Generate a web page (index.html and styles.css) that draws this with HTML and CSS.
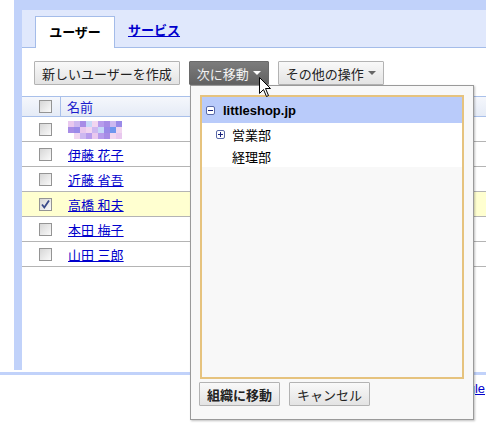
FILE: index.html
```html
<!DOCTYPE html>
<html lang="ja">
<head>
    <meta charset="UTF-8">
    <title>ユーザー</title>
    <link rel="stylesheet" href="styles.css">
</head>
<body>
    <div class="frame">
        <!-- Tabs -->
        <div class="tabbar">
            <div class="tab active">ユーザー</div>
            <a class="tab-link" href="#">サービス</a>
        </div>

        <div class="content">
            <!-- Toolbar -->
            <div class="toolbar">
                <button class="btn">新しいユーザーを作成</button>
                <button class="btn dark">次に移動 <span class="caret"></span></button>
                <button class="btn">その他の操作 <span class="caret"></span></button>
            </div>

            <!-- User list -->
            <div class="list">
                <div class="row head">
                    <div class="cell-check"><span class="check"></span></div>
                    <div class="cell-name">名前</div>
                </div>
                <div class="row">
                    <div class="cell-check"><span class="check"></span></div>
                    <div class="cell-name">
                        <div class="mosaic">
                            <span class="m1"></span><span class="m2"></span><span class="m3"></span><span class="m4"></span><span class="m5"></span><span class="m6"></span><span class="m3"></span><span class="m2"></span><span class="m7"></span><span class="m0"></span>
                            <span class="m3"></span><span class="m7"></span><span class="m1"></span><span class="m5"></span><span class="m2"></span><span class="m4"></span><span class="m7"></span><span class="m8"></span><span class="m5"></span><span class="m0"></span>
                            <span class="m0"></span><span class="m5"></span><span class="m2"></span><span class="m6"></span><span class="m1"></span><span class="m6"></span><span class="m3"></span><span class="m5"></span><span class="m1"></span><span class="m0"></span>
                        </div>
                    </div>
                </div>
                <div class="row">
                    <div class="cell-check"><span class="check"></span></div>
                    <div class="cell-name"><a href="#">伊藤 花子</a></div>
                </div>
                <div class="row">
                    <div class="cell-check"><span class="check"></span></div>
                    <div class="cell-name"><a href="#">近藤 省吾</a></div>
                </div>
                <div class="row selected">
                    <div class="cell-check">
                        <span class="check">
                            <svg width="11" height="11" viewBox="0 0 11 11"><path d="M2 5.5 L4.3 8.5 L9 1.5" fill="none" stroke="#3a4a8a" stroke-width="1.8"/></svg>
                        </span>
                    </div>
                    <div class="cell-name"><a href="#">高橋 和夫</a></div>
                </div>
                <div class="row">
                    <div class="cell-check"><span class="check"></span></div>
                    <div class="cell-name"><a href="#">本田 梅子</a></div>
                </div>
                <div class="row">
                    <div class="cell-check"><span class="check"></span></div>
                    <div class="cell-name"><a href="#">山田 三郎</a></div>
                </div>
            </div>
        </div>
    </div>

    <div class="footer-line"></div>
    <div class="footer"><a href="#">©2010 Google</a></div>

    <!-- Move to organisation popup -->
    <div class="popup">
        <div class="tree">
            <div class="tree-root">
                <span class="toggle">
                    <svg width="9" height="9" viewBox="0 0 9 9"><rect x="0.5" y="0.5" width="8" height="8" rx="1.5" fill="#fff" stroke="#5a6aa8"/><path d="M2 4.5 H7" stroke="#1a237e" stroke-width="1"/></svg>
                </span>
                littleshop.jp
            </div>
            <div class="tree-item">
                <span class="toggle">
                    <svg width="9" height="9" viewBox="0 0 9 9"><rect x="0.5" y="0.5" width="8" height="8" rx="1.5" fill="#fff" stroke="#5a6aa8"/><path d="M2 4.5 H7 M4.5 2 V7" stroke="#1a237e" stroke-width="1"/></svg>
                </span>
                営業部
            </div>
            <div class="tree-item leaf">経理部</div>
        </div>
        <div class="popup-actions">
            <button class="btn strong">組織に移動</button>
            <button class="btn">キャンセル</button>
        </div>
    </div>

    <!-- Mouse pointer -->
    <svg class="cursor" width="13" height="21" viewBox="0 0 13 21">
        <path d="M0.5 0.5 L0.5 16.5 L4.5 12.5 L7.5 19.5 L9.5 18.5 L6.5 11.5 L11.5 11.5 Z" fill="#fff" stroke="#000" stroke-width="1"/>
    </svg>
</body>
</html>
```

FILE: styles.css
```css
html, body {
    margin: 0;
    overflow: hidden;
}
body {
    font-family: "Liberation Sans", Arial, "Noto Sans CJK JP", sans-serif;
    font-size: 13px;
    color: #000;
    background-color: #fff;
    position: relative;
    height: 425px;
}
a {
    color: #0000cc;
}
.frame {
    margin-left: 14px;
    padding: 10px 0 0 8px;
    height: 370px;
    box-sizing: border-box;
    background-color: #c1d2fa;
}
.tabbar {
    display: flex;
    align-items: flex-end;
    height: 37px;
    padding-left: 13px;
    background-color: #e0e8fc;
    border-bottom: 1px solid #a4bce9;
}
.tab {
    width: 78px;
    height: 31px;
    line-height: 31px;
    text-align: center;
    margin-bottom: -1px;
    background-color: #fff;
    border: 1px solid #a4bce9;
    border-bottom: none;
    font-weight: bold;
}
.tab-link {
    margin-left: 13px;
    margin-bottom: 8px;
    font-weight: bold;
}
.content {
    background-color: #fff;
    height: 322px;
}
.toolbar {
    display: flex;
    gap: 9px;
    padding: 13px 0 0 12px;
}
.btn {
    height: 24px;
    padding: 0 7px;
    font-family: inherit;
    font-size: 13px;
    color: #222;
    background: linear-gradient(#f9f9f9, #e3e3e3);
    border: 1px solid #b3b3b3;
    border-radius: 1px;
    display: flex;
    align-items: center;
    gap: 4px;
}
.btn.dark {
    color: #f2f2f2;
    background: linear-gradient(#7c7c7c, #626262);
    border-color: #6a6a6a;
}
.btn.strong {
    font-weight: bold;
}
.caret {
    width: 0;
    height: 0;
    border-left: 4px solid transparent;
    border-right: 4px solid transparent;
    border-top: 4px solid #666;
}
.btn.dark .caret {
    border-top-color: #fff;
}
.list {
    margin-top: 11px;
}
.row {
    display: flex;
    align-items: center;
    height: 24px;
    border-bottom: 1px solid #b4b4b4;
}
.row.head {
    height: 19px;
    border-top: 1px solid #a9c0ea;
    border-bottom: 1px solid #a9c0ea;
    background: linear-gradient(#f5f7fc, #e5ebf6);
}
.row.head .cell-check {
    border-right: 1px solid #a9c0ea;
    width: 39px;
}
.row.head .cell-name {
    color: #1c1ccc;
}
.row.selected {
    background-color: #ffffd0;
}
.cell-check {
    width: 40px;
    height: 100%;
    display: flex;
    align-items: center;
    padding-left: 17px;
    box-sizing: border-box;
}
.cell-name {
    padding-left: 6px;
}
.check {
    width: 11px;
    height: 11px;
    border: 1px solid #949494;
    background: linear-gradient(135deg, #d6d6d6, #fafafa);
    display: flex;
}
.mosaic {
    display: grid;
    grid-template-columns: repeat(10, 6px);
    grid-auto-rows: 6px;
    margin-top: 1px;
}
.m0 { background-color: #fff; }
.m1 { background-color: #e9c8ee; }
.m2 { background-color: #cdb8f0; }
.m3 { background-color: #a78ce6; }
.m4 { background-color: #c6d8f8; }
.m5 { background-color: #f1d6f0; }
.m6 { background-color: #b79cec; }
.m7 { background-color: #9a8ae8; }
.m8 { background-color: #6f96ee; }
.footer-line {
    margin-top: 2px;
    height: 3px;
    background-color: #c1d2fa;
}
.footer {
    text-align: right;
    padding-top: 6px;
    padding-right: 1px;
}
.popup {
    position: absolute;
    left: 190px;
    top: 85px;
    width: 284px;
    height: 335px;
    box-sizing: border-box;
    padding: 9px 9px 0 9px;
    background-color: #f8f8f8;
    border: 1px solid #9a9a9a;
    box-shadow: 1px 1px 2px rgba(0, 0, 0, 0.25);
}
.tree {
    height: 284px;
    box-sizing: border-box;
    border: 2px solid #e6c37e;
    background-color: #f8f8f8;
}
.tree-root {
    height: 26px;
    display: flex;
    align-items: center;
    padding-left: 4px;
    gap: 8px;
    font-weight: bold;
    background-color: #b9cbfa;
}
.tree-item {
    height: 22px;
    display: flex;
    align-items: center;
    padding-left: 14px;
    gap: 7px;
    background-color: #fff;
}
.tree-item.leaf {
    padding-left: 30px;
}
.toggle {
    display: flex;
}
.popup-actions {
    display: flex;
    gap: 9px;
    margin-top: 3px;
    margin-left: -1px;
}
.popup-actions .btn {
    width: 81px;
    justify-content: center;
}
.cursor {
    position: absolute;
    left: 259px;
    top: 77px;
}
```
